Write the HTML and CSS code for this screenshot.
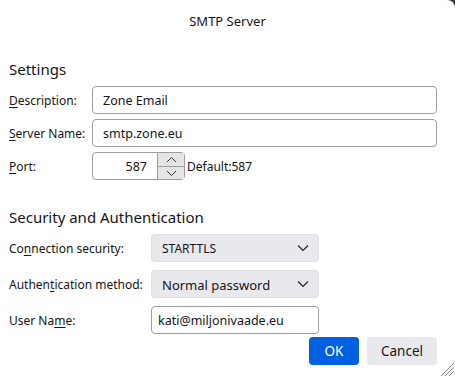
FILE: index.html
```html
<!doctype html>
<html>

<head>
  <title>SMTP Server</title>
  <link rel="stylesheet" href="styles.css">
</head>

<body>
  <div class="dialog">
    <div class="titlebar">SMTP Server</div>

    <form class="content">
      <h2 class="section-title">Settings</h2>
      <div class="settings">
        <label for="description"><u>D</u>escription:</label>
        <input type="text" id="description" class="text" value="Zone Email">

        <label for="server"><u>S</u>erver Name:</label>
        <input type="text" id="server" class="text" value="smtp.zone.eu">

        <label for="port"><u>P</u>ort:</label>
        <div class="port-row">
          <div class="number">
            <input type="text" id="port" class="number-value" value="587">
            <div class="spin">
              <span class="spin-btn">
                <svg width="11" height="7" viewBox="0 0 11 7"><path d="M1 6 L5.5 1.5 L10 6" fill="none" stroke="#333" stroke-width="1"/></svg>
              </span>
              <span class="spin-btn">
                <svg width="11" height="7" viewBox="0 0 11 7"><path d="M1 1 L5.5 5.5 L10 1" fill="none" stroke="#333" stroke-width="1"/></svg>
              </span>
            </div>
          </div>
          <span class="default">Default:587</span>
        </div>
      </div>

      <h2 class="section-title second">Security and Authentication</h2>
      <div class="security">
        <label>Co<u>n</u>nection security:</label>
        <div class="select">
          <span>STARTTLS</span>
          <svg width="12" height="8" viewBox="0 0 12 8"><path d="M1 1.5 L6 6.5 L11 1.5" fill="none" stroke="#222" stroke-width="1.2"/></svg>
        </div>

        <label>Authen<u>t</u>ication method:</label>
        <div class="select">
          <span class="big">Normal password</span>
          <svg width="12" height="8" viewBox="0 0 12 8"><path d="M1 1.5 L6 6.5 L11 1.5" fill="none" stroke="#222" stroke-width="1.2"/></svg>
        </div>

        <label for="user">User Na<u>m</u>e:</label>
        <input type="text" id="user" class="text short" value="kati@miljonivaade.eu">
      </div>

      <div class="buttons">
        <button type="button" class="btn primary">OK</button>
        <button type="button" class="btn">Cancel</button>
      </div>
    </form>

    <svg class="grip" width="16" height="16" viewBox="0 0 16 16">
      <path d="M2 15 L15 2 M6 15 L15 6 M10 15 L15 10" stroke="#888" stroke-width="1"/>
    </svg>
  </div>
</body>

</html>
```

FILE: styles.css
```css
html {
  background: #3a3a3a;
}

body {
  margin: 0;
  font-family: "Noto Sans", "Open Sans", sans-serif;
  font-size: 12px;
  color: #15141a;
}

.dialog {
  position: relative;
  width: 455px;
  height: 377px;
  background: #fff;
  border-top-right-radius: 8px;
  overflow: hidden;
}

.titlebar {
  height: 40px;
  display: flex;
  align-items: center;
  justify-content: center;
  padding-top: 1px;
  font-size: 13px;
}

.content {
  padding: 0 18px 0 9px;
}

.section-title {
  margin: 18px 0 7px 0;
  font-size: 15px;
  font-weight: 400;
  line-height: 20px;
}

.section-title.second {
  margin-top: 27px;
  margin-bottom: 7px;
}

label {
  display: flex;
  align-items: center;
}

u {
  text-underline-offset: 2px;
}

.settings {
  display: grid;
  grid-template-columns: 83px 1fr;
  row-gap: 5px;
}

.security {
  display: grid;
  grid-template-columns: 142px 168px;
  row-gap: 8px;
}

.text {
  font: inherit;
  font-size: 12.5px;
  color: inherit;
  height: 28px;
  box-sizing: border-box;
  border: 1px solid #9e9e9e;
  border-radius: 4px;
  padding: 0 10px;
  outline: none;
}

.text.short {
  padding: 0 6px;
}

.port-row {
  display: flex;
  align-items: center;
  gap: 2px;
}

.number {
  display: flex;
  align-items: center;
  width: 93px;
  height: 28px;
  box-sizing: border-box;
  border: 1px solid #9e9e9e;
  border-radius: 4px;
  padding-right: 1px;
}

.number-value {
  font: inherit;
  font-size: 12.5px;
  color: inherit;
  border: 0;
  outline: none;
  width: 54px;
  text-align: right;
  padding: 0 10px 0 0;
  background: none;
}

.spin {
  display: flex;
  flex-direction: column;
  border-left: 1px solid #9e9e9e;
  height: 26px;
}

.spin-btn {
  width: 26px;
  height: 13px;
  box-sizing: border-box;
  background: #e5e5e5;
  display: flex;
  align-items: center;
  justify-content: center;
}

.spin-btn + .spin-btn {
  border-top: 1px solid #9e9e9e;
}

.select {
  height: 28px;
  box-sizing: border-box;
  background: #e9e9ed;
  border: 1px solid #dedee3;
  border-radius: 4px;
  display: flex;
  align-items: center;
  justify-content: space-between;
  padding: 0 9px 0 10px;
}

.select .big {
  font-size: 13px;
  padding-top: 2px;
}

.buttons {
  display: flex;
  justify-content: flex-end;
  gap: 8px;
  margin-top: 3px;
}

.btn {
  font: inherit;
  font-size: 13.5px;
  height: 28px;
  border: 0;
  border-radius: 4px;
  background: #e9e9ed;
  color: #15141a;
  padding: 0 14px;
  min-width: 50px;
}

.btn.primary {
  background: #0061e0;
  color: #fff;
}

.grip {
  position: absolute;
  right: 0;
  bottom: 0;
}
```
